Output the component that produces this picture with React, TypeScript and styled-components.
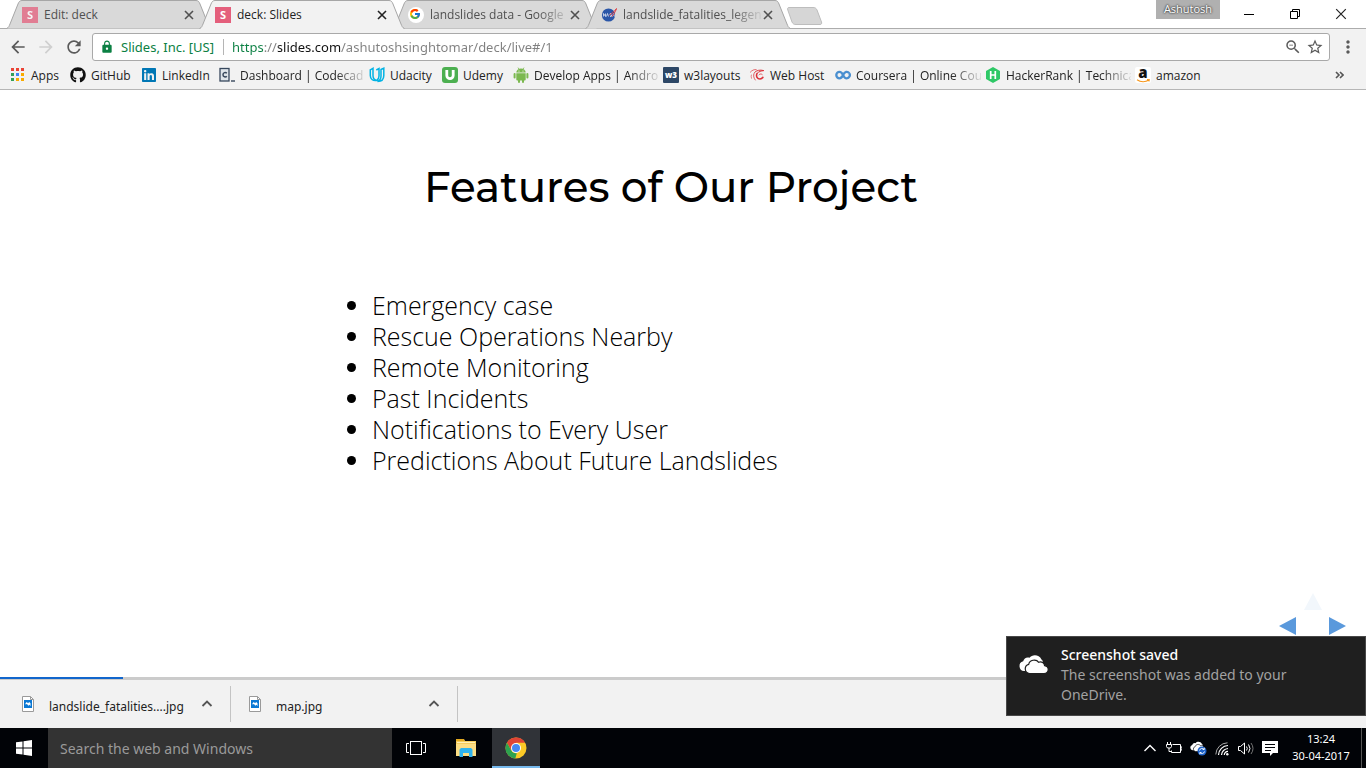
import React from "react";
import styled, { createGlobalStyle, css } from "styled-components";
import {
  MdArrowBack,
  MdArrowForward,
  MdLock,
  MdMoreVert,
  MdRefresh,
  MdStarBorder,
  MdZoomOut,
} from "react-icons/md";
import { FaGithub, FaLinkedin } from "react-icons/fa";
import { FcGoogle } from "react-icons/fc";

const GlobalStyle = createGlobalStyle`
  * { box-sizing: border-box; }
  body {
    margin: 0;
    background: #fff;
    font-family: "Open Sans", "Noto Sans", sans-serif;
    font-size: 12px;
    color: #222;
  }
  button, input {
    font: inherit;
    color: inherit;
    border: 0;
    padding: 0;
    background: none;
    outline: none;
  }
  svg { display: block; flex: none; }
`;

const Screen = styled.div`
  display: flex;
  flex-direction: column;
  min-height: 100vh;
`;

/* ---------- Tab strip ---------- */

const TabStrip = styled.header`
  display: flex;
  align-items: flex-start;
  height: 29px;
  padding: 0 2px 0 6px;
  box-shadow: inset 0 -1px #acacac;
`;

const TabItem = styled.div<{ $active?: boolean }>`
  position: relative;
  z-index: ${(p) => (p.$active ? 2 : 1)};
  display: flex;
  align-items: center;
  width: 206px;
  height: 29px;
  margin-right: -13px;
  padding: 0 16px;
  color: ${(p) => (p.$active ? "#222" : "#505050")};
`;

const TabShape = styled.svg`
  position: absolute;
  inset: 0;
  z-index: -1;
`;

const TabIcon = styled.span<{ $dim?: boolean }>`
  display: flex;
  flex: none;
  width: 16px;
  height: 16px;
  opacity: ${(p) => (p.$dim ? 0.75 : 1)};
`;

const fade = css`
  mask-image: linear-gradient(to right, #000 calc(100% - 30px), rgba(0, 0, 0, 0.1));
`;

const TabTitle = styled.a<{ $fade?: boolean }>`
  flex: 1;
  min-width: 0;
  margin-left: 6px;
  white-space: nowrap;
  color: inherit;
  text-decoration: none;
  ${(p) => p.$fade && fade}
`;

const CloseButton = styled.button`
  flex: none;
  width: 14px;
  height: 14px;
  padding: 2px;
`;

const NewTab = styled.button`
  width: 36px;
  height: 18px;
  margin: 7px 0 0 9px;
`;

const WindowControls = styled.div`
  display: flex;
  align-items: flex-start;
  margin-left: auto;
`;

const UserBadge = styled.button`
  width: 64px;
  height: 19px;
  margin-right: 6px;
  padding-bottom: 1px;
  background: #b0b0b0;
  color: #fff;
  font-size: 11px;
  line-height: 18px;
  text-shadow: 0 0 2px #333, 0 0 2px #333;
`;

const WindowButton = styled.button`
  display: flex;
  align-items: center;
  justify-content: center;
  width: 46px;
  height: 27px;
`;

/* ---------- Toolbar ---------- */

const Toolbar = styled.nav`
  display: flex;
  align-items: center;
  height: 33px;
  padding: 3px 8px 0;
  background: #f2f2f2;
  color: #555;
`;

const ToolButton = styled.button<{ $color?: string }>`
  display: flex;
  align-items: center;
  justify-content: center;
  width: 20px;
  height: 20px;
  margin-right: 8px;
  color: ${(p) => p.$color ?? "#5a5a5a"};
`;

const Omnibox = styled.form`
  display: flex;
  flex: 1;
  align-items: center;
  height: 28px;
  padding: 0 5px 0 7px;
  background: #fff;
  border: 1px solid #a9a9a9;
  border-radius: 3px;
  font-family: "Noto Sans", sans-serif;
  font-size: 13px;
`;

const SiteIdentity = styled.button`
  display: flex;
  align-items: center;
  gap: 7px;
  width: 124px;
  height: 16px;
  border-right: 1px solid #b5b5b5;
  color: #0b8043;
  white-space: nowrap;
`;

const Address = styled.input`
  flex: 1;
  min-width: 0;
  height: 24px;
  margin-left: 8px;
  background: linear-gradient(
    to right,
    #0b8043 0 32px,
    #808080 32px 46px,
    #111 46px 109px,
    #808080 109px
  );
  background-clip: text;
  -webkit-text-fill-color: transparent;
`;

const OmniAction = styled.button`
  display: flex;
  width: 18px;
  height: 18px;
  margin-left: 4px;
  color: #5a5a5a;
`;

const MenuButton = styled.button`
  display: flex;
  justify-content: center;
  width: 20px;
  margin-left: 8px;
  color: #5a5a5a;
`;

/* ---------- Bookmarks ---------- */

const BookmarkBar = styled.nav`
  display: flex;
  align-items: center;
  gap: 12px;
  height: 28px;
  padding: 0 22px 1px 10px;
  background: #f2f2f2;
  border-bottom: 1px solid #b6b6b6;
`;

const Bookmark = styled.a`
  display: flex;
  align-items: center;
  gap: 5px;
  color: #222;
  text-decoration: none;
`;

const BookmarkLabel = styled.span<{ $width: number; $fade?: boolean }>`
  width: ${(p) => p.$width}px;
  white-space: nowrap;
  ${(p) =>
    p.$fade &&
    css`
      margin-right: -8px;
      ${fade}
    `}
`;

const MoreBookmarks = styled.button`
  margin-left: auto;
  color: #555;
`;

/* ---------- Slide ---------- */

const Slide = styled.main`
  position: relative;
  display: flex;
  flex: 1;
  flex-direction: column;
  align-items: center;
  padding: 66px 24px 0 0;
`;

const SlideTitle = styled.h1`
  margin: 0;
  color: #000;
  font-family: Montserrat, Inter, sans-serif;
  font-size: 42px;
  font-weight: 500;
  line-height: 62px;
`;

const FeatureList = styled.ul`
  width: 598px;
  margin: 72px 0 0;
  padding: 0;
  color: #000;
  font-family: "Open Sans", sans-serif;
  font-size: 25px;
  font-weight: 300;
  line-height: 31px;
`;

const Feature = styled.li`
  &::marker { color: #000; }
`;

const SlideControls = styled.aside`
  position: absolute;
  right: 20px;
  bottom: 43px;
  display: grid;
  grid-template-columns: 17px 17px 17px;
  gap: 7px 8px;
  justify-items: center;
`;

const SlideArrow = styled.button<{ $column: number; $row: number }>`
  grid-column: ${(p) => p.$column};
  grid-row: ${(p) => p.$row};
  height: 17px;
`;

const ProgressTrack = styled.div`
  height: 3px;
  background: #cbcbcb;
`;

const ProgressFill = styled.div`
  width: 9%;
  height: 2px;
  background: #1266cc;
`;

/* ---------- Download shelf ---------- */

const DownloadShelf = styled.footer`
  display: flex;
  align-items: center;
  height: 48px;
  background: #f2f2f2;
`;

const Download = styled.div<{ $first?: boolean }>`
  display: flex;
  align-items: center;
  width: ${(p) => (p.$first ? 231 : 227)}px;
  height: 36px;
  padding: 0 17px 0 ${(p) => (p.$first ? 22 : 18)}px;
  border-right: 1px solid #c4c4c4;
`;

const DownloadName = styled.a`
  flex: 1;
  padding: 5px 0 0 15px;
  color: #222;
  font-family: "Noto Sans", sans-serif;
  white-space: nowrap;
  text-decoration: none;
`;

/* ---------- Taskbar ---------- */

const Taskbar = styled.footer`
  display: flex;
  align-items: center;
  height: 40px;
  background: #010307;
  color: #fff;
`;

const TaskButtons = styled.div`
  display: flex;
  gap: 2px;
`;

const TaskButton = styled.button<{ $active?: boolean }>`
  display: flex;
  align-items: center;
  justify-content: center;
  width: 48px;
  height: 40px;
  background: ${(p) => (p.$active ? "#303338" : "none")};
  box-shadow: ${(p) => (p.$active ? "inset 0 -2px #76b9ed" : "none")};
`;

const TaskSearch = styled.input`
  width: 344px;
  height: 40px;
  padding: 0 12px;
  background: #333;
  font-family: "Noto Sans", sans-serif;
  font-size: 14px;
  &::placeholder { color: #9a9a9a; opacity: 1; }
`;

const Tray = styled.div`
  display: flex;
  align-items: center;
  gap: 8px;
  margin-left: auto;
`;

const TrayButton = styled.button`
  width: 16px;
  height: 16px;
`;

const Clock = styled.time`
  width: 70px;
  margin-right: 5px;
  padding-bottom: 3px;
  font-family: "Noto Sans", sans-serif;
  font-size: 11px;
  line-height: 17px;
  text-align: center;
  white-space: nowrap;
`;

const ShowDesktop = styled.button`
  width: 5px;
  height: 40px;
  border-left: 1px solid #555;
`;

/* ---------- Notification ---------- */

const Toast = styled.section`
  position: fixed;
  right: 0;
  bottom: 52px;
  z-index: 5;
  display: flex;
  gap: 12px;
  width: 360px;
  height: 80px;
  padding: 8px 40px 0 12px;
  background: #1f1f1f;
  border: 1px solid #484848;
  color: #a2a2a2;
  font-family: "Noto Sans", sans-serif;
  font-size: 14px;
  line-height: 20px;
`;

const ToastIcon = styled.div`
  padding-top: 9px;
`;

const ToastTitle = styled.h2`
  margin: 0;
  color: #fff;
  font-size: 14px;
  font-weight: 500;
`;

const ToastBody = styled.p`
  margin: 0;
`;

/* ---------- Drawings ---------- */

const SlidesLogo = () => (
  <svg width="16" height="16" viewBox="0 0 16 16">
    <rect width="16" height="16" fill="#e45f7c" />
    <text x="8" y="12" textAnchor="middle" fontFamily="Open Sans" fontSize="11" fontWeight="700" fill="#fff">S</text>
  </svg>
);

const GoogleLogo = () => (
  <svg width="16" height="16" viewBox="0 0 16 16">
    <circle cx="8" cy="8" r="8" fill="#fff" />
    <FcGoogle x={1} y={1} width={14} height={14} />
  </svg>
);

const NasaLogo = () => (
  <svg width="16" height="16" viewBox="0 0 16 16">
    <circle cx="7.5" cy="8" r="6.6" fill="#2a56a8" />
    <path d="M2.500 9.500v-3l2 3v-3m1 3 1-3 1 3m3-2.800H9v1.300h1.500v1.500H9m2.500 0 1-3 1 3" fill="none" stroke="#dfe6f4" strokeWidth=".8" />
    <path d="M8.500 8.200C11.500 6 13.500 4 15.600 1.500 14 5.500 12.500 7.500 10.800 9.500" fill="none" stroke="#e0393e" strokeWidth="1" />
  </svg>
);

const AppsGrid = () => (
  <svg width="16" height="16" viewBox="0 0 16 16">
    {["#ea4335", "#ea4335", "#ea4335", "#34a058", "#4285f4", "#f9ab00", "#34a058", "#f9ab00", "#f9ab00"].map((c, i) => (
      <rect key={i} x={1 + (i % 3) * 5} y={1 + Math.floor(i / 3) * 5} width="3" height="3" fill={c} />
    ))}
  </svg>
);

const CodecademyLogo = () => (
  <svg width="16" height="16" viewBox="0 0 16 16" fill="none" stroke="#37475c">
    <rect x="1" y="1.500" width="9" height="12.500" strokeWidth="1.300" fill="#dfe5ea" />
    <path d="M7.800 6.200C6.700 5 4 5.300 4 7.700s2.700 2.700 3.800 1.500" strokeWidth="1.500" />
    <path d="M12 14H16" strokeWidth="1.400" />
  </svg>
);

const UdacityLogo = () => (
  <svg width="16" height="16" viewBox="0 0 16 16" fill="none" stroke="#02b3e4">
    <path d="M1.300 2.800 4 1.300V8.500c0 2.700 1.300 4.200 3.300 5C3.800 14 1.300 12 1.300 8.500z" strokeWidth="1.500" />
    <path d="M7.300 3 10 1.500V9c0 2-.8 3.500-2.400 4.700" strokeWidth="1.500" />
    <path d="M12 2.500 14.800 1.200V8.500c0 3.500-2.300 6-6.300 6 2.500-1 3.500-3 3.500-5.500z" strokeWidth="1.500" />
  </svg>
);

const UdemyLogo = () => (
  <svg width="16" height="16" viewBox="0 0 16 16">
    <rect width="16" height="16" rx="3" fill="#4caf50" />
    <path d="M4.800 3v5.500a3.200 3.200 0 0 0 6.400 0V3" fill="none" stroke="#fff" strokeWidth="2.800" />
  </svg>
);

const AndroidLogo = () => (
  <svg width="16" height="16" viewBox="0 0 16 16" fill="#7cb950">
    <path d="M3.300 5.600a4.700 4.200 0 0 1 9.400 0z" />
    <path d="m5 .6 1.200 2M11 .6l-1.200 2" stroke="#7cb950" strokeWidth=".8" />
    <path d="M3.300 6.200h9.400v6.300a1 1 0 0 1-1 1H4.300a1 1 0 0 1-1-1z" />
    <rect x=".6" y="6" width="2" height="5.500" rx="1" />
    <rect x="13.400" y="6" width="2" height="5.500" rx="1" />
    <rect x="5" y="11" width="2" height="5" rx="1" />
    <rect x="9" y="11" width="2" height="5" rx="1" />
    <circle cx="6" cy="4" r=".6" fill="#fff" />
    <circle cx="10" cy="4" r=".6" fill="#fff" />
  </svg>
);

const W3Logo = () => (
  <svg width="16" height="16" viewBox="0 0 16 16">
    <rect width="16" height="16" rx="1" fill="#2d4766" />
    <text x="8" y="11" textAnchor="middle" fontFamily="Open Sans" fontSize="8" fontWeight="800" fill="#fff">w3</text>
  </svg>
);

const WebHostLogo = () => (
  <svg width="16" height="16" viewBox="0 0 16 16" fill="none" stroke="#dc2f38" strokeLinecap="round">
    <path d="M1.300 5.200C3.200 3 5.200 2.400 7.200 2.600" strokeWidth=".7" />
    <path d="M5.500 5.500C7.500 3.200 11 2.600 14.800 3.600 12 3.900 10 4.500 8.500 6" strokeWidth="1" />
    <path d="M8 6.500c-1.300 2.800.3 5.500 3 5.500 1.300 0 2.200-.6 2.900-1.700" strokeWidth="1.600" />
    <path d="M5 6.500c-.8 2.300-.3 4.500 1.300 6.500M10 7.800c.9-1.100 2.300-1.100 3.200-.3" strokeWidth=".8" />
    <path d="M2.300 8c-.3 1.200-.2 2.200.2 3.300" strokeWidth=".6" />
  </svg>
);

const CourseraLogo = () => (
  <svg width="16" height="16" viewBox="0 0 16 16" fill="none" stroke="#4a8fd0" strokeWidth="2.300">
    <path d="M14.200 6.200C12.500 3.800 9.700 4.600 8.200 7.700 7 10.500 5.800 11.300 4.500 11.300A3.200 3.200 0 0 1 4.500 4.900C6 4.900 7 5.800 8 7.900c1.200 2.600 2.300 3.400 3.700 3.400a3.200 3.200 0 0 0 2.500-5.100" />
  </svg>
);

const HackerRankLogo = () => (
  <svg width="16" height="16" viewBox="0 0 16 16">
    <path d="M8 0 15 4v8l-7 4-7-4V4z" fill="#2ec866" />
    <path d="M5.700 4v8m4.600-8v8M5.700 8h4.600" stroke="#fff" strokeWidth="1.700" />
  </svg>
);

const AmazonLogo = () => (
  <svg width="16" height="16" viewBox="0 0 16 16">
    <rect width="16" height="16" rx="2" fill="#fff" />
    <text x="8" y="11" textAnchor="middle" fontFamily="Open Sans" fontSize="15" fontWeight="800" fill="#111">a</text>
    <path d="M2 12.700c3.500 2.500 8.500 2.500 12 .3m-2-.4 2.300.1-.5 1.800" fill="none" stroke="#f7981d" strokeWidth="1.100" />
  </svg>
);

const ImageFile = () => (
  <svg width="12" height="16" viewBox="0 0 12 16">
    <path d="M.5.500h8l3 3v12H.5z" fill="#fff" stroke="#9a9a9a" />
    <path d="M8.500.500v3h3" fill="none" stroke="#9a9a9a" />
    <rect x="2" y="4" width="8" height="8" fill="#0b78d4" />
    <path d="M3.500 8.500V7.300L4.800 6l1.200 1.200L7.200 6l1.300 1.300v3L7.500 8.800 6.300 9.800 5 8z" fill="#fff" />
  </svg>
);

const Cross = ({ size, width }: { size: number; width: number }) => (
  <svg width={size} height={size} viewBox="0 0 10 10" stroke="currentColor" strokeWidth={width}>
    <path d="m1 1 8 8m0-8-8 8" />
  </svg>
);

const ChevronUp = () => (
  <svg width="12" height="16" viewBox="0 0 12 16" fill="none" stroke="#555" strokeWidth="1.800">
    <path d="m1.500 10 4.500-4.500 4.500 4.500" />
  </svg>
);

const Clouds = ({ width, height, gap }: { width: number; height: number; gap: string }) => (
  <svg width={width} height={height} viewBox="0 0 30 20">
    <path d="M5 17a5 5 0 0 1-.8-9.800C5 4 8 2.700 10.500 3.800 13 .2 20 0 22.500 5.500 26 7 22 17 17 17z" fill="#fff" />
    <path d="M10.500 19.500a4.700 4.700 0 0 1-.8-9.200C10.500 6 17 4.500 19.700 8.300c2.800-1.200 5.600.5 5.900 3.300 5 .8 4.800 7.900-.6 7.900z" fill="#fff" stroke={gap} strokeWidth="1.200" />
  </svg>
);

const WindowsLogo = () => (
  <svg width="16" height="16" viewBox="0 0 16 16" fill="#fff">
    <path d="M0 2.300 6.500 1.400v6.100H0zM7.500 1.200 16 0v7.500H7.500zM0 8.500h6.500v6.100L0 13.700zM7.500 8.500H16V16l-8.500-1.200z" />
  </svg>
);

const TaskViewIcon = () => (
  <svg width="20" height="16" viewBox="0 0 20 16" fill="none" stroke="#fff">
    <rect x="4.500" y="1.500" width="11" height="13" />
    <path d="M3 3.500H.5v9H3M17 3.500h2.500v9H17" />
  </svg>
);

const FolderIcon = () => (
  <svg width="22" height="20" viewBox="0 0 22 20">
    <path d="M1 1h8l1 2h11v15H1z" fill="#f5cc5c" />
    <path d="M1 1h8v2H1z" fill="#e3a920" />
    <path d="M2 4h18v1H2z" fill="#fff0b8" />
    <path d="M1 6h20v12H1z" fill="#fcdd83" />
    <path d="M4.500 19v-7.500l1.500-1.500h10l1.500 1.500V19H14v-4H8v4z" fill="#2fb2ec" />
  </svg>
);

const ChromeIcon = () => (
  <svg width="22" height="22" viewBox="0 0 22 22">
    <circle cx="11" cy="11" r="10.500" fill="#fbc926" />
    <path d="M1.900 5.750A10.500 10.500 0 0 1 20.100 5.750H11L6.450 13.630z" fill="#e04435" />
    <path d="M1.900 5.750 6.450 13.630A5.250 5.250 0 0 0 11.800 16.200L10.300 21.480A10.500 10.500 0 0 1 1.900 5.750z" fill="#2da24f" />
    <circle cx="11" cy="11" r="5" fill="#fff" />
    <circle cx="11" cy="11" r="4" fill="#4688f1" />
  </svg>
);

const TrayIcon = ({ children }: { children: React.ReactNode }) => (
  <svg width="16" height="16" viewBox="0 0 16 16" fill="none" stroke="#fff">
    {children}
  </svg>
);

/* ---------- Data ---------- */

const tabs = [
  { title: "Edit: deck", icon: <SlidesLogo />, dim: true },
  { title: "deck: Slides", icon: <SlidesLogo />, active: true },
  { title: "landslides data - Google", icon: <GoogleLogo />, fade: true },
  { title: "landslide_fatalities_legen", icon: <NasaLogo />, fade: true },
];

const bookmarks = [
  { label: "Apps", width: 27, icon: <AppsGrid /> },
  { label: "GitHub", width: 38, icon: <FaGithub size={16} color="#111" /> },
  { label: "LinkedIn", width: 45, icon: <FaLinkedin size={16} color="#0077b5" /> },
  { label: "Dashboard | Codecad", width: 125, fade: true, icon: <CodecademyLogo /> },
  { label: "Udacity", width: 40, icon: <UdacityLogo /> },
  { label: "Udemy", width: 38, icon: <UdemyLogo /> },
  { label: "Develop Apps | Andro", width: 125, fade: true, icon: <AndroidLogo /> },
  { label: "w3layouts", width: 53, icon: <W3Logo /> },
  { label: "Web Host", width: 53, icon: <WebHostLogo /> },
  { label: "Coursera | Online Cou", width: 125, fade: true, icon: <CourseraLogo /> },
  { label: "HackerRank | Technica", width: 125, fade: true, icon: <HackerRankLogo /> },
  { label: "amazon", width: 42, icon: <AmazonLogo /> },
];

const features = [
  "Emergency case",
  "Rescue Operations Nearby",
  "Remote Monitoring",
  "Past Incidents",
  "Notifications to Every User",
  "Predictions About Future Landslides",
];

export default function App() {
  return (
    <Screen>
      <GlobalStyle />
      <TabStrip>
        {tabs.map((t) => (
          <TabItem key={t.title} $active={t.active}>
            <TabShape width="206" height="29" viewBox="0 0 206 29">
              <path
                d="M.5 28.500C3 27.500 3 26 4 24L12 4C13 1.500 14 .5 16 .5H190C192 .5 193 1.500 194 4L202 24C203 26 203 27.500 205.500 28.500"
                fill={t.active ? "#f2f2f2" : "#d9d9d9"}
                stroke="#a6a6a6"
              />
              {t.active && <path d="M2 28.500H204" stroke="#f2f2f2" />}
            </TabShape>
            <TabIcon $dim={t.dim}>{t.icon}</TabIcon>
            <TabTitle href="#" $fade={t.fade}>{t.title}</TabTitle>
            <CloseButton aria-label="Close tab"><Cross size={10} width={1.6} /></CloseButton>
          </TabItem>
        ))}
        <NewTab aria-label="New tab">
          <svg width="36" height="18" viewBox="0 0 36 18">
            <path d="M2 .5H26C28 .5 29 1 30 3l4.500 12c.5 1.500 0 2.500-1.500 2.500H9c-2 0-3-.5-4-2.500L.8 3C.3 1.500.5.5 2 .5z" fill="#d6d6d6" stroke="#bdbdbd" />
          </svg>
        </NewTab>
        <WindowControls>
          <UserBadge>Ashutosh</UserBadge>
          <WindowButton aria-label="Minimize">
            <svg width="10" height="10" viewBox="0 0 10 10"><path d="M0 5.500h10" stroke="#000" /></svg>
          </WindowButton>
          <WindowButton aria-label="Restore">
            <svg width="10" height="10" viewBox="0 0 10 10" fill="none" stroke="#000">
              <path d="M.5 2.500h7v7h-7zM2.500 2.500v-2h7v7h-2" />
            </svg>
          </WindowButton>
          <WindowButton aria-label="Close"><Cross size={12} width={1} /></WindowButton>
        </WindowControls>
      </TabStrip>

      <Toolbar>
        <ToolButton aria-label="Back"><MdArrowBack size={20} /></ToolButton>
        <ToolButton aria-label="Forward" $color="#cfcfcf"><MdArrowForward size={20} /></ToolButton>
        <ToolButton aria-label="Reload"><MdRefresh size={20} /></ToolButton>
        <Omnibox>
          <SiteIdentity type="button"><MdLock size={14} />Slides, Inc. [US]</SiteIdentity>
          <Address aria-label="Address" defaultValue="https://slides.com/ashutoshsinghtomar/deck/live#/1" />
          <OmniAction type="button" aria-label="Zoom"><MdZoomOut size={18} /></OmniAction>
          <OmniAction type="button" aria-label="Bookmark this page"><MdStarBorder size={18} /></OmniAction>
        </Omnibox>
        <MenuButton aria-label="Menu"><MdMoreVert size={20} /></MenuButton>
      </Toolbar>

      <BookmarkBar>
        {bookmarks.map((b) => (
          <Bookmark key={b.label} href="#">
            {b.icon}
            <BookmarkLabel $width={b.width} $fade={b.fade}>{b.label}</BookmarkLabel>
          </Bookmark>
        ))}
        <MoreBookmarks aria-label="More bookmarks">
          <svg width="9" height="8" viewBox="0 0 9 8" fill="none" stroke="currentColor" strokeWidth="1.600">
            <path d="m1 1 3 3-3 3m4-6 3 3-3 3" />
          </svg>
        </MoreBookmarks>
      </BookmarkBar>

      <Slide>
        <SlideTitle>Features of Our Project</SlideTitle>
        <FeatureList>
          {features.map((f) => <Feature key={f}>{f}</Feature>)}
        </FeatureList>
        <SlideControls>
          <SlideArrow $column={2} $row={1} aria-label="Up">
            <svg width="18" height="17" viewBox="0 0 18 17"><path d="M9 0l9 17H0z" fill="#f2f7fc" /></svg>
          </SlideArrow>
          <SlideArrow $column={1} $row={2} aria-label="Previous">
            <svg width="17" height="18" viewBox="0 0 17 18"><path d="M0 9 17 0v18z" fill="#5a99dc" /></svg>
          </SlideArrow>
          <SlideArrow $column={3} $row={2} aria-label="Next">
            <svg width="17" height="18" viewBox="0 0 17 18"><path d="M17 9 0 0v18z" fill="#5a99dc" /></svg>
          </SlideArrow>
        </SlideControls>
      </Slide>

      <ProgressTrack><ProgressFill /></ProgressTrack>

      <DownloadShelf>
        <Download $first>
          <ImageFile />
          <DownloadName href="#">landslide_fatalities....jpg</DownloadName>
          <button aria-label="Download options"><ChevronUp /></button>
        </Download>
        <Download>
          <ImageFile />
          <DownloadName href="#">map.jpg</DownloadName>
          <button aria-label="Download options"><ChevronUp /></button>
        </Download>
      </DownloadShelf>

      <Taskbar>
        <TaskButton aria-label="Start"><WindowsLogo /></TaskButton>
        <TaskSearch aria-label="Search" placeholder="Search the web and Windows" />
        <TaskButtons>
          <TaskButton aria-label="Task view"><TaskViewIcon /></TaskButton>
          <TaskButton aria-label="File Explorer"><FolderIcon /></TaskButton>
          <TaskButton aria-label="Chrome" $active><ChromeIcon /></TaskButton>
        </TaskButtons>
        <Tray>
          <TrayButton aria-label="Show hidden icons">
            <TrayIcon><path d="m2.500 11 5.500-5.500 5.500 5.500" strokeWidth="1.400" /></TrayIcon>
          </TrayButton>
          <TrayButton aria-label="Battery">
            <TrayIcon>
              <path d="M6.500 4.500h8v8h-9v-2M14.500 7h1.500v3h-1.500" />
              <path d="M1.500 2v2.500m3-2.500v2.500M.5 4.500h5v2l-1 1.500h-3l-1-1.500zM3 8v3.500h2.500" />
            </TrayIcon>
          </TrayButton>
          <TrayButton aria-label="OneDrive">
            <svg width="17" height="16" viewBox="0 0 17 16">
              <Clouds width={16} height={13} gap="#010307" />
              <circle cx="12" cy="11" r="4.500" fill="#1e62c8" />
              <path d="M9.500 10.500a2.600 2.600 0 0 1 4.500-1.200m.5 2.200a2.600 2.600 0 0 1-4.500 1.200M14.300 7.800v1.700h-1.700M9.800 14.200v-1.700h1.700" fill="none" stroke="#fff" strokeWidth=".9" />
            </svg>
          </TrayButton>
          <TrayButton aria-label="Wi-Fi">
            <TrayIcon>
              <path d="M4.500 15A10 10 0 0 1 14 5.500M7.500 15A7 7 0 0 1 14 8.500M10.300 15a4 4 0 0 1 3.700-3.700" strokeWidth="1.200" />
              <path d="M1.800 14.500A12 12 0 0 1 13.500 2.800" stroke="#aaa" strokeWidth="1" />
              <circle cx="13.300" cy="14.200" r="1.200" fill="#fff" stroke="none" />
            </TrayIcon>
          </TrayButton>
          <TrayButton aria-label="Volume">
            <TrayIcon>
              <path d="M.5 6.500h2L6.500 3v11l-4-3.500h-2zM8.500 6.500q1.500 2 0 4M10.500 4.500q3 4 0 8" />
              <path d="M13 3q4 5.500 0 11" stroke="#777" />
            </TrayIcon>
          </TrayButton>
          <TrayButton aria-label="Notifications">
            <TrayIcon>
              <path d="M0 1h16v12h-5l-3 3v-3H0z" fill="#fff" stroke="none" />
              <path d="M3 4.500h10M3 7.500h10M3 10.500h6" stroke="#010307" />
            </TrayIcon>
          </TrayButton>
          <Clock>13:24<br />30-04-2017</Clock>
        </Tray>
        <ShowDesktop aria-label="Show desktop" />
      </Taskbar>

      <Toast role="status">
        <ToastIcon><Clouds width={30} height={20} gap="#1f1f1f" /></ToastIcon>
        <div>
          <ToastTitle>Screenshot saved</ToastTitle>
          <ToastBody>The screenshot was added to your OneDrive.</ToastBody>
        </div>
      </Toast>
    </Screen>
  );
}
